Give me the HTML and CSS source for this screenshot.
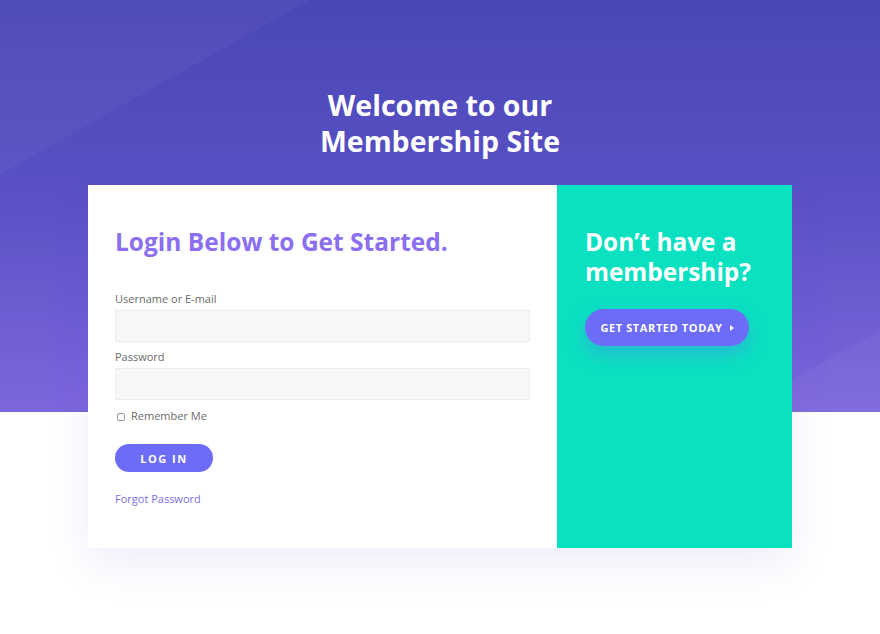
FILE: index.html
```html
<!DOCTYPE html>
<html lang="en">
<head>
<meta charset="utf-8">
<title>Membership Login</title>
<link rel="stylesheet" href="styles.css">
</head>
<body>
<div class="page">
  <h1 class="hero-title"><span class="line">Welcome to our</span><span class="line">Membership Site</span></h1>
  <div class="card">
    <div class="login">
      <h2 class="login-title">Login Below to Get Started.</h2>
      <form class="form">
        <label class="label" for="user">Username or E-mail</label>
        <input class="input" id="user" type="text">
        <label class="label label-pw" for="pw">Password</label>
        <input class="input" id="pw" type="password">
        <label class="remember"><span class="check"></span>Remember Me</label>
        <button type="button" class="btn-login">LOG IN</button>
        <a class="forgot" href="#">Forgot Password</a>
      </form>
    </div>
    <div class="signup">
      <h2 class="signup-title"><span class="line">Don’t have a</span><span class="line">membership?</span></h2>
      <a class="btn-start" href="#">GET STARTED TODAY <span class="tri"></span></a>
    </div>
  </div>
</div>
</body>
</html>
```

FILE: styles.css
```css
* { box-sizing: border-box; }
html, body { margin: 0; padding: 0; }
body {
  font-family: "Open Sans", "Noto Sans", sans-serif;
  background: #fff;
  width: 880px;
  height: 634px;
  overflow: hidden;
}
.page {
  height: 634px;
  padding-top: 87px;
  background-color: #fff;
  background-image:
    linear-gradient(150.6deg, rgba(255,255,255,0.035) 19.2%, rgba(255,255,255,0) 19.2%, rgba(255,255,255,0) 91%, rgba(255,255,255,0.04) 91%),
    linear-gradient(180deg, #4947b7 0%, #5850c4 45%, #7d66de 100%);
  background-size: 100% 412px, 100% 412px;
  background-repeat: no-repeat;
}
.line { display: block; }
.hero-title {
  margin: 0;
  text-align: center;
  color: #fff;
  font-size: 28.5px;
  line-height: 36px;
  font-weight: 700;
}
.card {
  width: 704px;
  height: 363px;
  margin: 26px auto 0;
  display: grid;
  grid-template-columns: 469px 235px;
  background: #fff;
  box-shadow: 0 18px 40px rgba(90, 70, 200, 0.09);
}
.login {
  padding: 42px 27px 0 27px;
}
.login-title {
  margin: 0;
  color: #8b6ff0;
  font-size: 24.5px;
  line-height: 30px;
  font-weight: 700;
}
.form {
  display: flex;
  flex-direction: column;
  align-items: flex-start;
  margin-top: 33px;
}
.label {
  font-size: 11px;
  line-height: 18px;
  color: #6b6b6b;
  margin-bottom: 2px;
}
.label-pw { margin-top: 6px; }
.input {
  width: 415px;
  height: 32px;
  margin: 0;
  background: #f7f7f7;
  border: 1px solid #ececec;
  border-radius: 0;
  padding: 0 8px;
  font: inherit;
}
.remember {
  margin-top: 7px;
  display: flex;
  align-items: center;
  font-size: 11px;
  line-height: 18px;
  color: #6b6b6b;
}
.check {
  width: 8px;
  height: 8px;
  border: 1px solid #999;
  border-radius: 2px;
  margin: 1px 6px 0 2px;
  background: #fff;
}
.btn-login {
  margin-top: 19px;
  width: 98px;
  height: 28px;
  border: 0;
  border-radius: 14px;
  background: #6d6cf8;
  color: #fff;
  font-family: inherit;
  font-size: 11px;
  font-weight: 700;
  letter-spacing: 1.5px;
  padding: 0;
}
.forgot {
  margin-top: 18px;
  font-size: 11px;
  line-height: 18px;
  color: #7a6fe0;
  text-decoration: none;
}
.signup {
  background: #0ae1c1;
  padding: 42px 20px 0 28px;
}
.signup-title {
  margin: 0;
  color: #fff;
  font-size: 24.4px;
  line-height: 30px;
  font-weight: 700;
}
.btn-start {
  margin-top: 22px;
  display: inline-flex;
  align-items: center;
  justify-content: center;
  gap: 7px;
  width: 164px;
  height: 37px;
  border-radius: 19px;
  background: #6d6cf8;
  color: #fff;
  font-size: 11px;
  font-weight: 700;
  letter-spacing: 0.6px;
  text-decoration: none;
  box-shadow: 0 8px 18px rgba(100, 110, 240, 0.35);
}
.tri {
  width: 0;
  height: 0;
  border-left: 4px solid #fff;
  border-top: 3.5px solid transparent;
  border-bottom: 3.5px solid transparent;
}
```
